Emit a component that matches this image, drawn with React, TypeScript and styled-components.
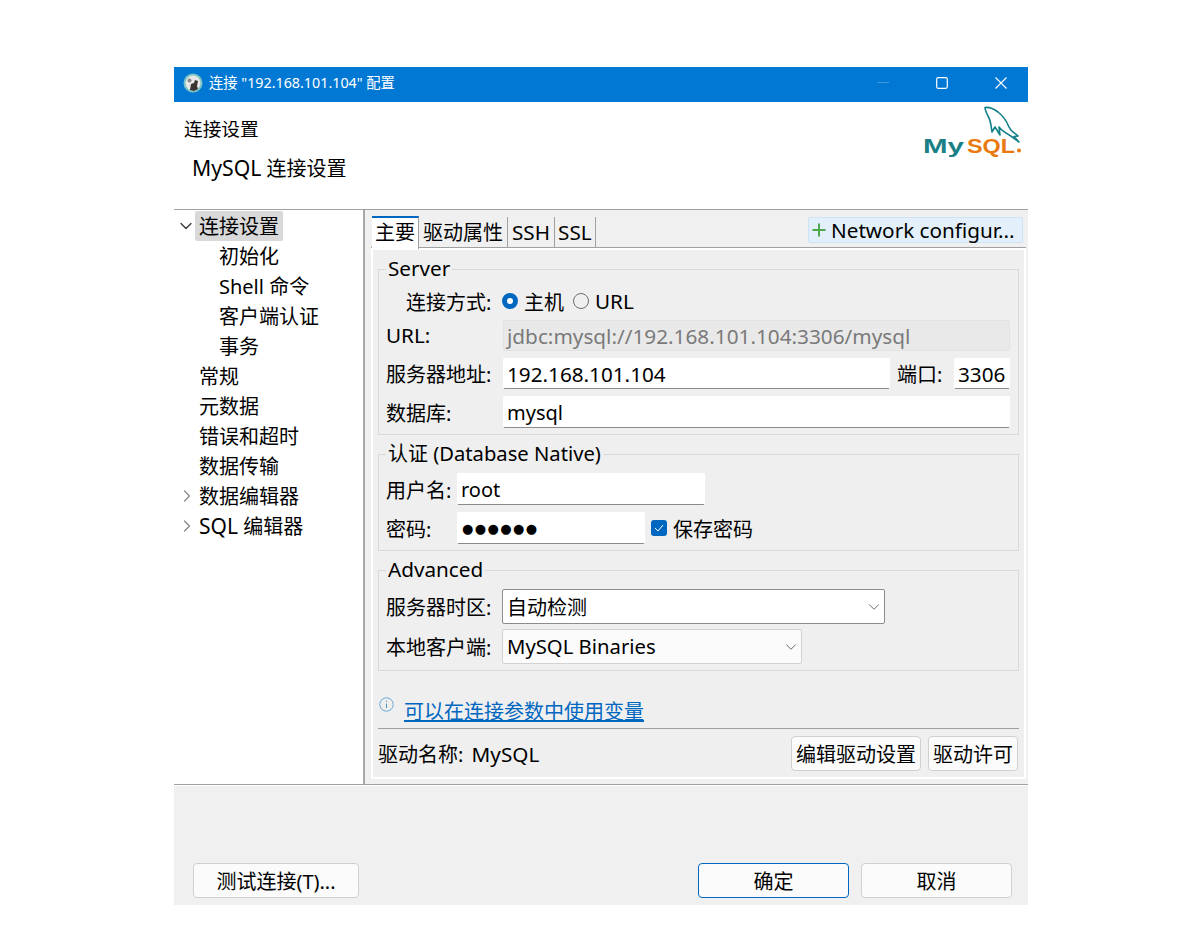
import { ChevronDown, ChevronRight, Plus } from "lucide-react";
import styled, { createGlobalStyle } from "styled-components";

const GlobalStyle = createGlobalStyle`
  html, body {
    margin: 0;
    background: #fff;
  }
  body {
    font-family: "Noto Sans", "Noto Sans CJK SC", sans-serif;
    font-size: 20px;
    color: #000;
  }
`;

const Page = styled.div`
  padding: 67px 0 44px 174px;
`;

const Window = styled.div`
  width: 854px;
  display: flex;
  flex-direction: column;
`;

const TitleBar = styled.div`
  height: 35px;
  box-sizing: border-box;
  background: #0078d4;
  color: #fff;
  display: flex;
  align-items: center;
  gap: 5px;
  padding: 0 0 4px 9px;
  font-size: 14.3px;
`;

const TitleText = styled.span`
  margin: 0 0 2px 1px;
  flex: 1;
`;

const WinButton = styled.div`
  width: 54px;
  display: flex;
  align-items: center;
  justify-content: center;
`;

const Header = styled.div`
  height: 107px;
  display: flex;
  justify-content: space-between;
  border-bottom: 1px solid #a0a0a0;
`;

const HeaderText = styled.div`
  padding: 14px 0 0 10px;
`;

const HeaderTitle = styled.div`
  font-size: 18.7px;
  line-height: 26px;
`;

const HeaderSub = styled.div`
  margin: 14px 0 0 8px;
  line-height: 26px;
`;

const Logo = styled.svg`
  margin: 4px 6px 0 0;
`;

const Latin = styled.span<{ $size?: number }>`
  font-size: ${(p) => p.$size ?? 20.7}px;
  line-height: 1;
`;

const Body = styled.div`
  height: 574px;
  display: flex;
  border-bottom: 1px solid #a0a0a0;
`;

const Tree = styled.div`
  width: 189px;
  padding-top: 1px;
  background: #fff;
  border-right: 2px solid #a8a8a8;
`;

const TreeRow = styled.div<{ $level?: number }>`
  height: 30px;
  display: flex;
  align-items: center;
  padding-left: ${(p) => 5 + (p.$level ?? 0) * 20}px;
`;

const Arrow = styled.span`
  width: 16px;
  height: 30px;
  display: flex;
  align-items: center;
  flex: none;
`;

const OpenArrow = styled(ChevronDown)`
  margin-left: -3px;
  flex: none;
`;

const ClosedArrow = styled(ChevronRight)`
  margin-left: -2px;
  flex: none;
`;

const TreeLabel = styled.span<{ $selected?: boolean }>`
  height: 30px;
  line-height: 32px;
  padding: 0 4px;
  border-radius: 2px;
  background: ${(p) => (p.$selected ? "#d9d9d9" : "transparent")};
`;

const Right = styled.div`
  flex: 1;
  background: #f0f0f0;
  padding: 0 2px 5px 6px;
  display: flex;
  flex-direction: column;
`;

const TabBar = styled.div`
  height: 37px;
  flex: none;
  display: flex;
  align-items: flex-end;
  border-bottom: 1px solid #a0a0a0;
  padding-left: 1px;
`;

const Tab = styled.div<{ $active?: boolean; $narrow?: boolean }>`
  height: ${(p) => (p.$active ? 33 : 30)}px;
  line-height: ${(p) => (p.$active ? 30 : 32)}px;
  padding: 0 ${(p) => (p.$active ? 3 : p.$narrow ? 3 : 4)}px;
  background: ${(p) => (p.$active ? "#fff" : "transparent")};
  border-top: ${(p) => (p.$active ? "2px solid #0067c0" : "0")};
  border-right: 1px solid #a0a0a0;
  box-sizing: border-box;
  margin-bottom: ${(p) => (p.$active ? "-2px" : "0")};
  position: relative;
`;

const NetworkButton = styled.div`
  margin: 0 3px 4px auto;
  width: 215px;
  height: 26px;
  box-sizing: border-box;
  background: #e3f0fb;
  border: 1px solid #cde4f7;
  border-radius: 2px;
  display: flex;
  align-items: center;
  gap: 2px;
  white-space: nowrap;
`;

const TabPanel = styled.div`
  flex: 1;
  background: #fff;
  padding: 2px;
  display: flex;
`;

const Content = styled.div`
  flex: 1;
  background: #efefef;
  padding: 7px 5px 6px;
  display: flex;
  flex-direction: column;
`;

const Group = styled.fieldset<{ $top?: number; $gap?: number }>`
  margin: 0 0 7px;
  padding: ${(p) => p.$top ?? 5}px 8px 6px 7px;
  border: 1px solid #d9d9d9;
  min-width: 0;
  display: flex;
  flex-direction: column;
  gap: ${(p) => p.$gap ?? 7}px;
`;

const Legend = styled.legend`
  padding: 0 2px;
  height: 24px;
  line-height: 24px;
`;

const RadioRow = styled.div`
  height: 30px;
  margin-bottom: -3px;
  display: flex;
  align-items: center;
`;

const FormRow = styled.div<{ $height?: number }>`
  height: ${(p) => p.$height ?? 32}px;
  display: flex;
  align-items: center;
`;

const Label = styled.span<{ $width: number; $indent?: number }>`
  width: ${(p) => p.$width}px;
  padding-left: ${(p) => p.$indent ?? 0}px;
  box-sizing: border-box;
  flex: none;
  white-space: nowrap;
`;

const Field = styled.div<{ $width?: number; $disabled?: boolean; $size?: number }>`
  ${(p) => (p.$width ? `width: ${p.$width}px; flex: none;` : "flex: 1;")}
  height: 100%;
  box-sizing: border-box;
  padding: 0 3px;
  display: flex;
  align-items: center;
  font-size: ${(p) => p.$size ?? 20}px;
  white-space: nowrap;
  overflow: hidden;
  border-radius: 2px;
  background: ${(p) => (p.$disabled ? "#e9e9e9" : "#fff")};
  color: ${(p) => (p.$disabled ? "#7a7a7a" : "#000")};
  border: 1px solid ${(p) => (p.$disabled ? "#e2e2e2" : "#fff")};
  border-bottom-color: ${(p) => (p.$disabled ? "#e2e2e2" : "#8a8a8a")};
`;

const Dots = styled.span`
  font-family: "DejaVu Sans", sans-serif;
  font-size: 13px;
  letter-spacing: 1.4px;
  margin-left: 1px;
`;

const Radio = styled.span<{ $checked?: boolean }>`
  width: 16px;
  height: 16px;
  flex: none;
  box-sizing: border-box;
  border-radius: 50%;
  margin: 0 6px 0 0;
  background: ${(p) => (p.$checked ? "#fff" : "transparent")};
  border: ${(p) => (p.$checked ? "5px solid #0067c0" : "1px solid #6e6e6e")};
`;

const RadioText = styled.span`
  margin-right: 9px;
`;

const Checkbox = styled.span`
  width: 16px;
  height: 16px;
  flex: none;
  margin: 0 6px;
  border-radius: 3px;
  background: #0067c0;
  display: flex;
  align-items: center;
  justify-content: center;
`;

const Select = styled.div<{ $width: number; $strong?: boolean }>`
  width: ${(p) => p.$width}px;
  height: 35px;
  box-sizing: border-box;
  background: ${(p) => (p.$strong ? "#fff" : "#fbfbfb")};
  border: 1px solid ${(p) => (p.$strong ? "#8c8c8c" : "#d2d2d2")};
  border-radius: 2px;
  display: flex;
  align-items: center;
  justify-content: space-between;
  padding: 0 1px 0 4px;
`;

const HintRow = styled.div`
  margin-top: 17px;
  height: 30px;
  flex: none;
  display: flex;
  align-items: center;
  gap: 10px;
`;

const InfoIcon = styled.svg`
  margin: 2px 0 0 1px;
  align-self: flex-start;
`;

const HintLink = styled.a`
  color: #0067c0;
  text-decoration: underline;
`;

const Rule = styled.div`
  height: 1px;
  margin-top: 3px;
  background: #a0a0a0;
  flex: none;
`;

const DriverRow = styled.div`
  margin-top: 7px;
  height: 35px;
  flex: none;
  display: flex;
  align-items: center;
  gap: 7px;
  padding-right: 1px;
`;

const DriverName = styled.span`
  flex: 1;
`;

const DriverValue = styled(Latin)`
  margin-left: 3px;
`;

const Button = styled.button<{ $width: number; $primary?: boolean }>`
  width: ${(p) => p.$width}px;
  height: 35px;
  padding: 0;
  font: inherit;
  color: #000;
  background: #fbfbfb;
  border: 1px solid ${(p) => (p.$primary ? "#0067c0" : "#d0d0d0")};
  border-radius: 4px;
  white-space: nowrap;
`;

const Footer = styled.div`
  height: 120px;
  box-sizing: border-box;
  background: #f0f0f0;
  border-top: 1px solid #fff;
  display: flex;
  align-items: flex-end;
  gap: 12px;
  padding: 0 16px 7px 19px;
`;

const Spacer = styled.div`
  flex: 1;
`;

function AppIcon() {
  return (
    <svg width="20" height="20" viewBox="0 0 20 20">
      <circle cx="10" cy="10" r="9.5" fill="#7fc4c4" />
      <circle cx="10" cy="10" r="7.5" fill="#e8e8e8" />
      <path d="M7 17l1-6 3-1 1-3 3 1-1 5 1 3-4 2z" fill="#3a3532" />
      <circle cx="6.5" cy="7.5" r="2" fill="#8a8a8a" />
    </svg>
  );
}

function MySqlLogo() {
  return (
    <Logo width="100" height="54" viewBox="0 0 100 54">
      <path
        d="M63 1.5C67 1 72 3 76 6C81 10 85 16 87 21C89 26 93 27 96 30L92 30.5L97 36C93 33 89 30 84 27C81 25 79 24 77 21L78 29L73 21L70 26C69 20 69 15 66 10C64.5 7 63 4 63 1.5Z"
        fill="none"
        stroke="#11808a"
        strokeWidth="1.6"
        strokeLinejoin="round"
      />
      <text x="1" y="47" fontFamily="'Liberation Sans', sans-serif" fontWeight="700" fontSize="21" fill="#1a7f86" textLength="41" lengthAdjust="spacingAndGlyphs">
        My
      </text>
      <text x="45" y="47" fontFamily="'Liberation Sans', sans-serif" fontWeight="700" fontSize="21" fill="#e87a10" textLength="48" lengthAdjust="spacingAndGlyphs">
        SQL
      </text>
      <circle cx="97" cy="44.5" r="2" fill="#e87a10" />
    </Logo>
  );
}

function Info() {
  return (
    <InfoIcon width="15" height="15" viewBox="0 0 15 15" fill="none">
      <circle cx="7.5" cy="7.5" r="6.7" stroke="#6aa9d8" />
      <path d="M7.5 6.5v4.5M7.5 3.7v1.2" stroke="#4a94cc" />
    </InfoIcon>
  );
}

const treeItems: { label: React.ReactNode; key: string; level?: number; arrow?: "open" | "closed"; selected?: boolean }[] = [
  { key: "conn", label: "连接设置", arrow: "open", selected: true },
  { key: "init", label: "初始化", level: 1 },
  { key: "shell", label: "Shell 命令", level: 1 },
  { key: "auth", label: "客户端认证", level: 1 },
  { key: "tx", label: "事务", level: 1 },
  { key: "general", label: "常规" },
  { key: "meta", label: "元数据" },
  { key: "err", label: "错误和超时" },
  { key: "transfer", label: "数据传输" },
  { key: "editor", label: "数据编辑器", arrow: "closed" },
  { key: "sql", label: <><Latin $size={21}>SQL</Latin> 编辑器</>, arrow: "closed" },
];

export default function App() {
  return (
    <>
      <GlobalStyle />
      <Page>
        <Window>
          <TitleBar>
            <AppIcon />
            <TitleText>连接 "192.168.101.104" 配置</TitleText>
            <WinButton>
              <svg width="12" height="2" viewBox="0 0 12 2">
                <path d="M0 .5h12" stroke="#3f97dd" />
              </svg>
            </WinButton>
            <WinButton>
              <svg width="12" height="12" viewBox="0 0 12 12">
                <rect x=".7" y=".7" width="10.6" height="10.6" rx="1.5" fill="none" stroke="#fff" strokeWidth="1.2" />
              </svg>
            </WinButton>
            <WinButton>
              <svg width="12" height="12" viewBox="0 0 12 12">
                <path d="M.5.5l11 11M11.5.5l-11 11" stroke="#fff" strokeWidth="1.1" />
              </svg>
            </WinButton>
          </TitleBar>
          <Header>
            <HeaderText>
              <HeaderTitle>连接设置</HeaderTitle>
              <HeaderSub><Latin $size={21.2}>MySQL</Latin> 连接设置</HeaderSub>
            </HeaderText>
            <MySqlLogo />
          </Header>
          <Body>
            <Tree>
              {treeItems.map((item) => (
                <TreeRow key={item.key} $level={item.level}>
                  <Arrow>
                    {item.arrow === "open" && <OpenArrow size={20} color="#333" strokeWidth={1.5} />}
                    {item.arrow === "closed" && <ClosedArrow size={20} color="#888" strokeWidth={1.5} />}
                  </Arrow>
                  <TreeLabel $selected={item.selected}>{item.label}</TreeLabel>
                </TreeRow>
              ))}
            </Tree>
            <Right>
              <TabBar>
                <Tab $active>主要</Tab>
                <Tab>驱动属性</Tab>
                <Tab><Latin>SSH</Latin></Tab>
                <Tab $narrow><Latin>SSL</Latin></Tab>
                <NetworkButton>
                  <Plus size={20} color="#4ea84e" strokeWidth={2.4} />
                  <Latin>Network configur...</Latin>
                </NetworkButton>
              </TabBar>
              <TabPanel>
                <Content>
                  <Group>
                    <Legend><Latin>Server</Latin></Legend>
                    <RadioRow>
                      <Label $width={116} $indent={20}>连接方式:</Label>
                      <Radio $checked />
                      <RadioText>主机</RadioText>
                      <Radio />
                      <Latin>URL</Latin>
                    </RadioRow>
                    <FormRow $height={31}>
                      <Label $width={117}><Latin>URL:</Latin></Label>
                      <Field $disabled $size={20.75}>jdbc:mysql://192.168.101.104:3306/mysql</Field>
                    </FormRow>
                    <FormRow $height={31}>
                      <Label $width={117}>服务器地址:</Label>
                      <Field $size={20.7}>192.168.101.104</Field>
                      <Label $width={64} $indent={7}>端口:</Label>
                      <Field $width={56} $size={20.7}>3306</Field>
                    </FormRow>
                    <FormRow>
                      <Label $width={117}>数据库:</Label>
                      <Field>mysql</Field>
                    </FormRow>
                  </Group>
                  <Group $top={7}>
                    <Legend>认证 <Latin $size={20.2}>(Database Native)</Latin></Legend>
                    <FormRow>
                      <Label $width={71}>用户名:</Label>
                      <Field $width={248}>root</Field>
                    </FormRow>
                    <FormRow>
                      <Label $width={71}>密码:</Label>
                      <Field $width={188}>
                        <Dots>●●●●●●</Dots>
                      </Field>
                      <Checkbox>
                        <svg width="10" height="8" viewBox="0 0 10 8">
                          <path d="M1 4l3 3 5-6" fill="none" stroke="#fff" />
                        </svg>
                      </Checkbox>
                      <span>保存密码</span>
                    </FormRow>
                  </Group>
                  <Group $top={7} $gap={5}>
                    <Legend><Latin>Advanced</Latin></Legend>
                    <FormRow $height={35}>
                      <Label $width={116}>服务器时区:</Label>
                      <Select $width={383} $strong>
                        自动检测
                        <ChevronDown size={18} color="#666" strokeWidth={1.3} />
                      </Select>
                    </FormRow>
                    <FormRow $height={35}>
                      <Label $width={116}>本地客户端:</Label>
                      <Select $width={300}>
                        <Latin $size={20.3}>MySQL Binaries</Latin>
                        <ChevronDown size={18} color="#666" strokeWidth={1.3} />
                      </Select>
                    </FormRow>
                  </Group>
                  <HintRow>
                    <Info />
                    <HintLink href="#">可以在连接参数中使用变量</HintLink>
                  </HintRow>
                  <Rule />
                  <DriverRow>
                    <DriverName>驱动名称: <DriverValue>MySQL</DriverValue></DriverName>
                    <Button $width={130}>编辑驱动设置</Button>
                    <Button $width={90}>驱动许可</Button>
                  </DriverRow>
                </Content>
              </TabPanel>
            </Right>
          </Body>
          <Footer>
            <Button $width={166}>测试连接(T)...</Button>
            <Spacer />
            <Button $width={151} $primary>确定</Button>
            <Button $width={151}>取消</Button>
          </Footer>
        </Window>
      </Page>
    </>
  );
}
